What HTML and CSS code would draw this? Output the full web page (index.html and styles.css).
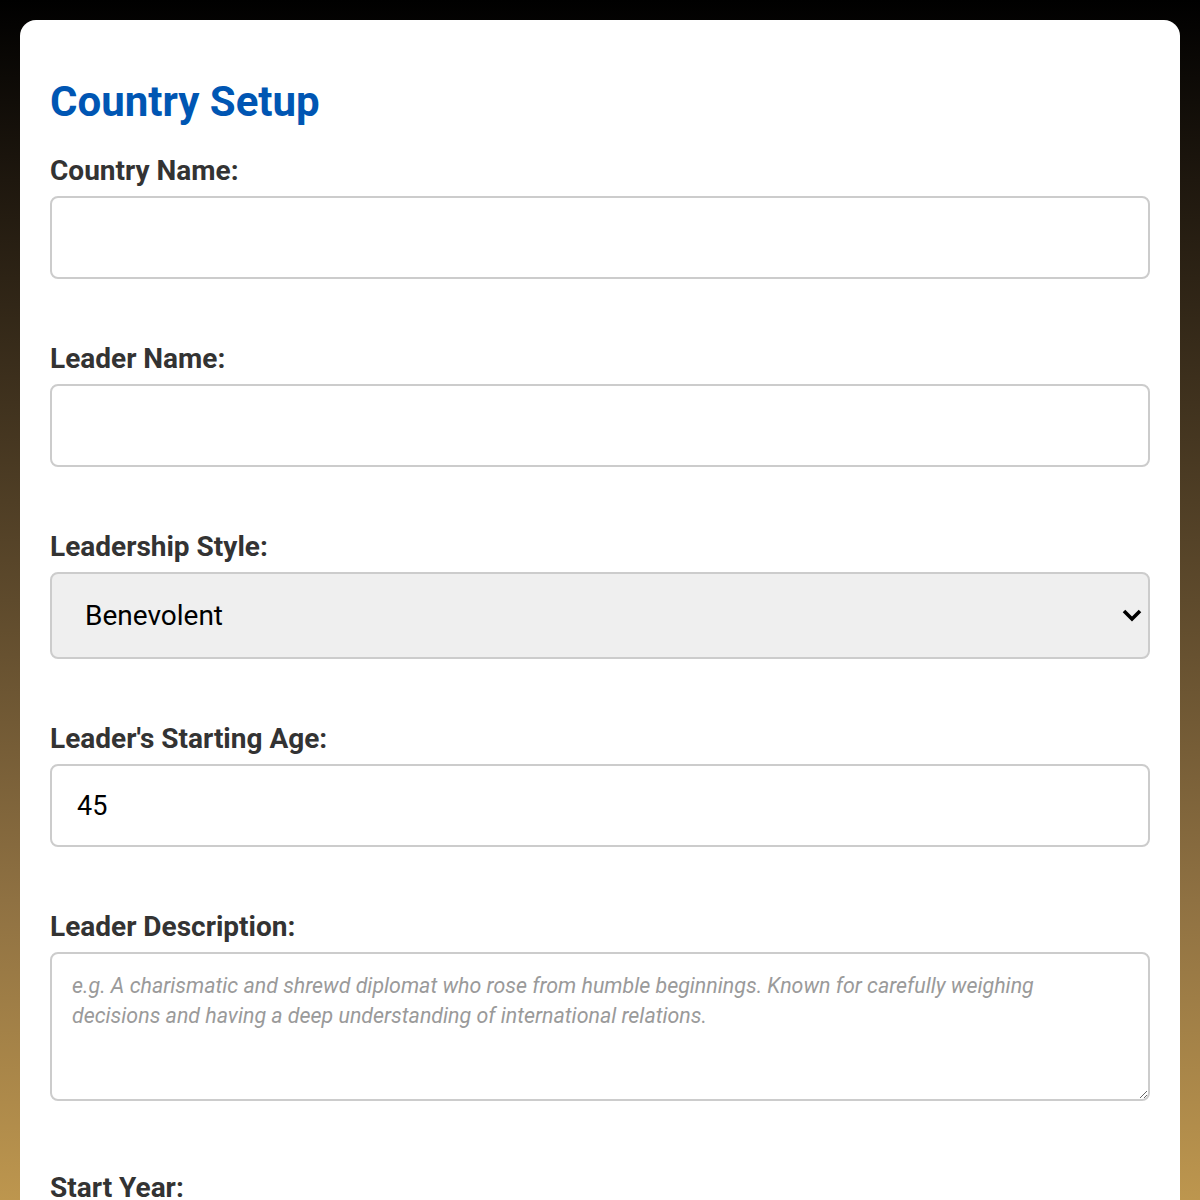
FILE: index.html
```html
<!DOCTYPE html>
<html lang="en">
<head>
    <meta charset="UTF-8">
    <meta name="viewport" content="width=device-width, initial-scale=1.0">
    <title>Country Setup</title>
    <link rel="stylesheet" href="styles.css">
</head>
<body>
    <div class="container">
        <h1>Country Setup</h1>
        <form id="setupForm">
            <div class="form-group">
                <label for="countryName">Country Name:</label>
                <input type="text" id="countryName">
            </div>
            <div class="form-group">
                <label for="leaderName">Leader Name:</label>
                <input type="text" id="leaderName">
            </div>
            <div class="form-group">
                <label for="leadershipStyle">Leadership Style:</label>
                <select id="leadershipStyle">
                    <option>Benevolent</option>
                    <option>Authoritarian</option>
                    <option>Democratic</option>
                </select>
            </div>
            <div class="form-group">
                <label for="leaderAge">Leader's Starting Age:</label>
                <input type="number" id="leaderAge" value="45">
            </div>
            <div class="form-group description">
                <label for="leaderDescription">Leader Description:</label>
                <textarea id="leaderDescription" rows="4" placeholder="e.g. A charismatic and shrewd diplomat who rose from humble beginnings. Known for carefully weighing decisions and having a deep understanding of international relations."></textarea>
            </div>
            <div class="form-group">
                <label for="startYear">Start Year:</label>
                <input type="number" id="startYear" value="2024">
            </div>
        </form>
    </div>
</body>
</html>
```

FILE: styles.css
```css
html {
    background: linear-gradient(to bottom, #000 0, #1e170e 180px, #5e4a2c 600px, #8f7142 900px, #bd964e 1200px);
    background-color: #bd964e;
}
body {
    font-family: Roboto, "Liberation Sans", sans-serif;
    margin: 0;
    padding: 20px;
    color: #333;
}
.container {
    background-color: #fff;
    border-radius: 16px;
    padding: 30px 30px 40px;
}
h1 {
    color: #0056b3;
    font-size: 42px;
    line-height: 46px;
    margin: 29px 0 29px;
}
.form-group {
    margin-bottom: 63px;
}
.form-group.description {
    margin-bottom: 70px;
}
label {
    display: block;
    font-weight: bold;
    font-size: 28px;
    line-height: 30px;
    padding-top: 2px;
    margin-bottom: 10px;
}
input, select, textarea {
    display: block;
    width: 100%;
    box-sizing: border-box;
    border: 2px solid #ccc;
    border-radius: 8px;
    font-family: Roboto, "Liberation Sans", sans-serif;
    font-size: 27px;
    color: #000;
    margin: 0;
}
input {
    height: 83px;
    padding: 0 25px;
    -moz-appearance: textfield;
}
input::-webkit-outer-spin-button,
input::-webkit-inner-spin-button {
    -webkit-appearance: none;
    margin: 0;
}
select {
    height: 87px;
    padding: 0 60px 0 33px;
    font-size: 28px;
    background-color: #efefef;
    -webkit-appearance: none;
    appearance: none;
    background-image: url("data:image/svg+xml,%3Csvg xmlns='http://www.w3.org/2000/svg' width='20' height='13' viewBox='0 0 20 13'%3E%3Cpath d='M2 2l8 8 8-8' fill='none' stroke='%23000' stroke-width='3.6'/%3E%3C/svg%3E");
    background-repeat: no-repeat;
    background-position: right 6px center;
}
textarea {
    height: 149px;
    padding: 17px 50px 17px 20px;
    font-size: 21.4px;
    line-height: 30px;
    resize: vertical;
}
textarea::placeholder {
    color: #9a9a9a;
    font-style: italic;
}
```
